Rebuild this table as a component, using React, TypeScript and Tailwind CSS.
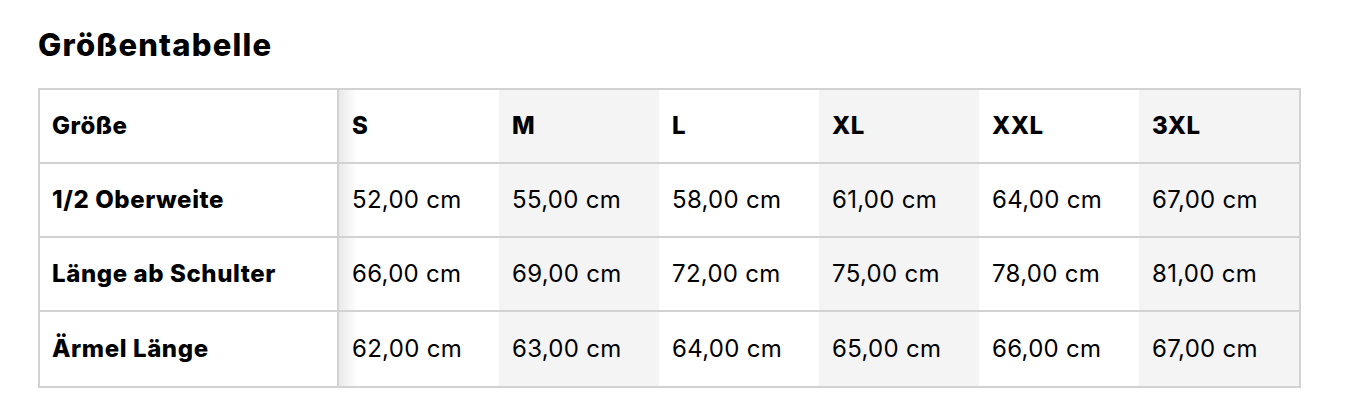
import React from "react";

const sizes = ["S", "M", "L", "XL", "XXL", "3XL"];
const rows: { label: string; values: string[] }[] = [
  { label: "1/2 Oberweite", values: ["52,00 cm", "55,00 cm", "58,00 cm", "61,00 cm", "64,00 cm", "67,00 cm"] },
  { label: "Länge ab Schulter", values: ["66,00 cm", "69,00 cm", "72,00 cm", "75,00 cm", "78,00 cm", "81,00 cm"] },
  { label: "Ärmel Länge", values: ["62,00 cm", "63,00 cm", "64,00 cm", "65,00 cm", "66,00 cm", "67,00 cm"] },
];

function cellBg(i: number) {
  if (i === 0) return "bg-[linear-gradient(to_right,#e9e9e9,#ffffff_18px)]";
  return i % 2 === 1 ? "bg-[#f4f4f4]" : "bg-white";
}

export default function App() {
  return (
    <div className="w-[1352px] h-[416px] bg-white text-black px-[38px] pt-[27px]" style={{ fontFamily: "Inter, 'Noto Sans', sans-serif" }}>
      <h2 className="text-[31px] leading-[36px] font-extrabold tracking-[1.2px] mb-[25px]">Größentabelle</h2>
      <div className="w-[1263px] border-2 border-[#d2d2d2]">
        <div className="flex h-[74px] border-b-2 border-[#d2d2d2]">
          <div className="w-[299px] border-r-2 border-[#d2d2d2] flex items-center pl-[12px] text-[24px] font-extrabold tracking-[0.5px]">Größe</div>
          {sizes.map((s, i) => (
            <div key={s} className={`w-[160px] flex items-center pl-[13px] text-[24px] font-extrabold tracking-[0.5px] ${cellBg(i)}`}>{s}</div>
          ))}
        </div>
        {rows.map((r, ri) => (
          <div key={r.label} className={`flex h-[74px] ${ri < rows.length - 1 ? "border-b-2 border-[#d2d2d2]" : "h-[72px]"}`}>
            <div className="w-[299px] border-r-2 border-[#d2d2d2] flex items-center pl-[12px] text-[24px] font-extrabold tracking-[0.6px]">{r.label}</div>
            {r.values.map((v, i) => (
              <div key={i} className={`w-[160px] flex items-center pl-[13px] text-[24px] tracking-[0.3px] ${cellBg(i)}`}>{v}</div>
            ))}
          </div>
        ))}
      </div>
    </div>
  );
}
